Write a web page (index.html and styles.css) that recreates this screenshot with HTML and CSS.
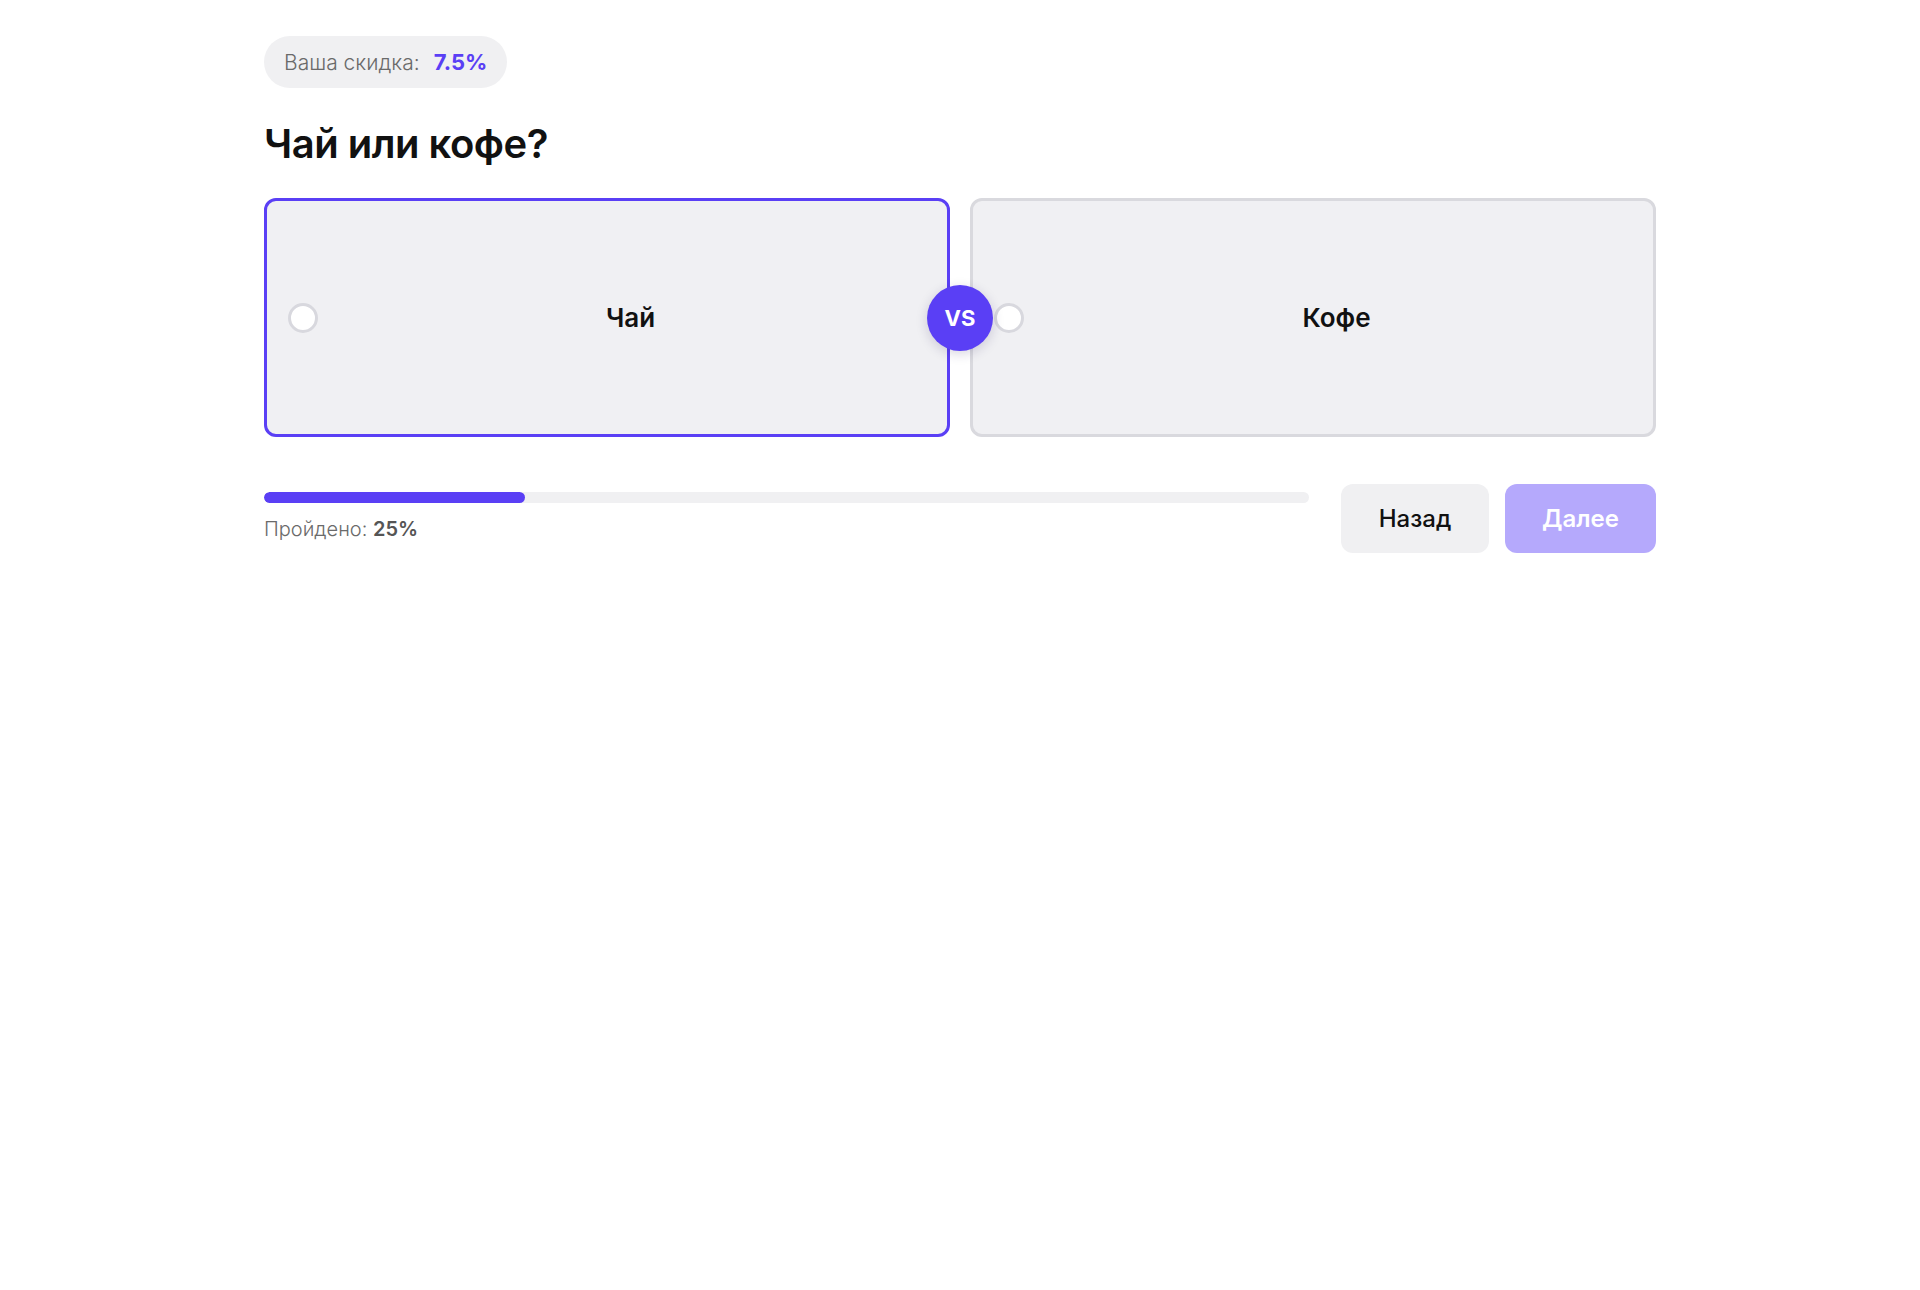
FILE: index.html
```html
<!DOCTYPE html>
<html lang="ru">
<head>
    <meta charset="UTF-8">
    <meta name="viewport" content="width=device-width, initial-scale=1">
    <title>Чай или кофе?</title>
    <link rel="stylesheet" href="styles.css">
</head>
<body>

<div class="quiz">
    <div class="discount">
        <span class="discount-label">Ваша скидка:</span>
        <span class="discount-value">7.5%</span>
    </div>

    <h1>Чай или кофе?</h1>

    <div class="choices">
        <label class="choice selected">
            <span class="radio"></span>
            <span class="choice-text">Чай</span>
        </label>
        <label class="choice">
            <span class="radio"></span>
            <span class="choice-text">Кофе</span>
        </label>
        <div class="vs">VS</div>
    </div>

    <div class="footer">
        <div class="progress">
            <div class="progress-track">
                <div class="progress-fill" style="width: 25%"></div>
            </div>
            <div class="progress-text">Пройдено: <b>25%</b></div>
        </div>
        <button class="btn btn-back">Назад</button>
        <button class="btn btn-next" disabled>Далее</button>
    </div>
</div>

</body>
</html>
```

FILE: styles.css
```css
body {
    font-family: Inter, "Noto Sans", Arial, sans-serif;
    background-color: #fff;
    color: #111;
    margin: 0;
    padding: 36px 0;
}
.quiz {
    width: 1392px;
    margin: 0 auto;
}
.discount {
    display: inline-flex;
    align-items: center;
    gap: 14px;
    height: 52px;
    padding: 0 20px;
    background: #f0f0f2;
    border-radius: 26px;
    font-size: 21px;
}
.discount-label {
    color: #6a6a6a;
    font-weight: 300;
}
.discount-value {
    color: #5a3ff5;
    font-weight: 700;
    font-size: 22px;
}
h1 {
    font-size: 40px;
    font-weight: 600;
    line-height: 48px;
    margin: 32px 0 30px;
    letter-spacing: -0.5px;
}
.choices {
    position: relative;
    display: grid;
    grid-template-columns: 1fr 1fr;
    gap: 20px;
}
.choice {
    display: flex;
    align-items: center;
    gap: 20px;
    height: 239px;
    box-sizing: border-box;
    padding: 0 21px;
    background: #f0f0f3;
    border: 3px solid #d9d9de;
    border-radius: 12px;
    cursor: pointer;
}
.choice.selected {
    border-color: #5a3ff5;
}
.radio {
    width: 30px;
    height: 30px;
    box-sizing: border-box;
    border: 3px solid #d8d8de;
    border-radius: 50%;
    background: #fff;
    flex-shrink: 0;
}
.choice-text {
    flex: 1;
    text-align: center;
    font-size: 26px;
    font-weight: 600;
    padding-right: 3px;
}
.vs {
    position: absolute;
    left: 50%;
    top: 50%;
    width: 66px;
    height: 66px;
    margin: -33px 0 0 -33px;
    border-radius: 50%;
    background: #5a3ff5;
    color: #fff;
    font-size: 22px;
    font-weight: 700;
    display: flex;
    align-items: center;
    justify-content: center;
    box-shadow: 0 3px 12px rgba(40, 30, 90, 0.18);
}
.footer {
    display: flex;
    align-items: center;
    gap: 16px;
    margin-top: 47px;
}
.progress {
    flex: 1;
    align-self: flex-start;
    margin: 8px 16px 0 0;
}
.progress-track {
    height: 11px;
    border-radius: 6px;
    background: #f0f0f2;
    overflow: hidden;
}
.progress-fill {
    height: 100%;
    border-radius: 6px;
    background: #5a3ff5;
}
.progress-text {
    margin-top: 14px;
    font-size: 20px;
    font-weight: 300;
    color: #6a6a6a;
}
.progress-text b {
    font-weight: 600;
    color: #555;
}
.btn {
    height: 69px;
    border: none;
    border-radius: 12px;
    font-family: inherit;
    font-size: 24px;
    font-weight: 500;
    cursor: pointer;
}
.btn-back {
    width: 148px;
    background: #f0f0f2;
    color: #111;
}
.btn-next {
    width: 151px;
    background: #b5a9fc;
    color: #fff;
    font-weight: 600;
}
```
